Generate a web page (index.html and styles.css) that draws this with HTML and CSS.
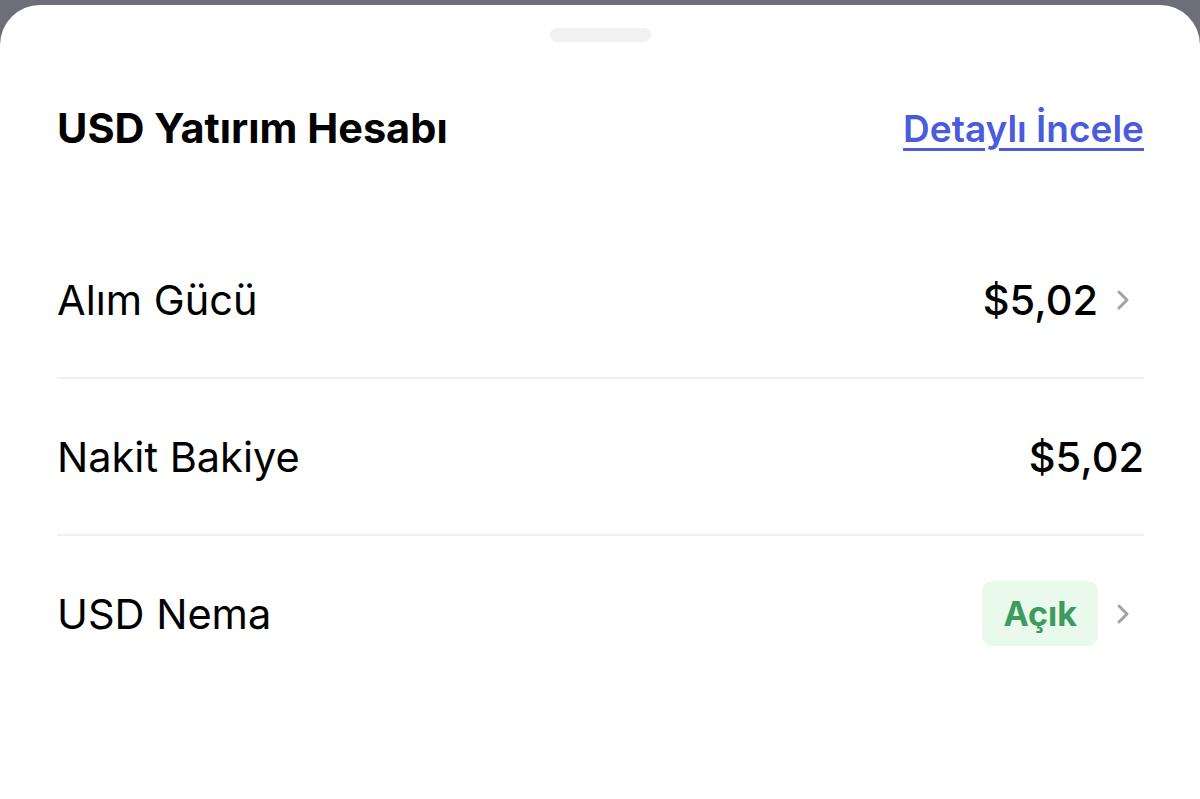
FILE: index.html
```html
<!DOCTYPE html>
<html lang="tr">
<head>
    <meta charset="UTF-8">
    <meta name="viewport" content="width=device-width, initial-scale=1.0">
    <title>USD Yatırım Hesabı</title>
    <link rel="stylesheet" href="styles.css">
</head>
<body>
    <div class="sheet">
        <div class="grabber"></div>

        <div class="header">
            <h1>USD Yatırım Hesabı</h1>
            <a href="#" class="detail-link">Detaylı İncele</a>
        </div>

        <div class="rows">
            <div class="row">
                <span class="label">Alım Gücü</span>
                <div class="right">
                    <span class="value">$5,02</span>
                    <svg class="chevron" width="28" height="24" viewBox="0 0 28 24" fill="none">
                        <path d="M3 4L11 12L3 20" stroke="#a2a2a8" stroke-width="3" stroke-linecap="round" stroke-linejoin="round"/>
                    </svg>
                </div>
            </div>

            <div class="row">
                <span class="label">Nakit Bakiye</span>
                <div class="right">
                    <span class="value">$5,02</span>
                </div>
            </div>

            <div class="row">
                <span class="label">USD Nema</span>
                <div class="right">
                    <span class="badge">Açık</span>
                    <svg class="chevron" width="28" height="24" viewBox="0 0 28 24" fill="none">
                        <path d="M3 4L11 12L3 20" stroke="#a2a2a8" stroke-width="3" stroke-linecap="round" stroke-linejoin="round"/>
                    </svg>
                </div>
            </div>
        </div>
    </div>
</body>
</html>
```

FILE: styles.css
```css
html, body {
    height: 100%;
}
body {
    margin: 0;
    padding: 5px 0 0;
    box-sizing: border-box;
    background-color: #6e6d7a;
    font-family: Inter, 'Noto Sans', sans-serif;
    color: #000;
}
.sheet {
    background-color: #fff;
    border-radius: 40px 40px 0 0;
    height: 100%;
    padding: 23px 56px 0 57px;
    box-sizing: border-box;
}
.grabber {
    width: 101px;
    height: 14px;
    margin: 0 auto;
    border-radius: 7px;
    background-color: #f1f1f4;
}
.header {
    display: flex;
    justify-content: space-between;
    align-items: center;
    height: 44px;
    margin-top: 64px;
    margin-bottom: 72px;
}
.header h1 {
    margin: 0;
    font-size: 41.5px;
    font-weight: 700;
}
.detail-link {
    color: #4a5bdb;
    font-size: 37px;
    font-weight: 600;
    text-decoration: underline;
    text-decoration-thickness: 3px;
    text-underline-offset: 6px;
}
.row {
    display: flex;
    justify-content: space-between;
    align-items: center;
    height: 155px;
    border-bottom: 2px solid #f0f0f2;
}
.row:last-child {
    border-bottom: none;
}
.label {
    font-size: 41.5px;
    font-weight: 400;
}
.right {
    display: flex;
    align-items: center;
    gap: 18px;
}
.value {
    font-size: 41.5px;
    font-weight: 500;
}
.badge {
    background-color: #e9f9ec;
    color: #3e9b5e;
    font-size: 34px;
    font-weight: 700;
    padding: 12px 21px;
    border-radius: 10px;
}
.chevron {
    display: block;
}
```
